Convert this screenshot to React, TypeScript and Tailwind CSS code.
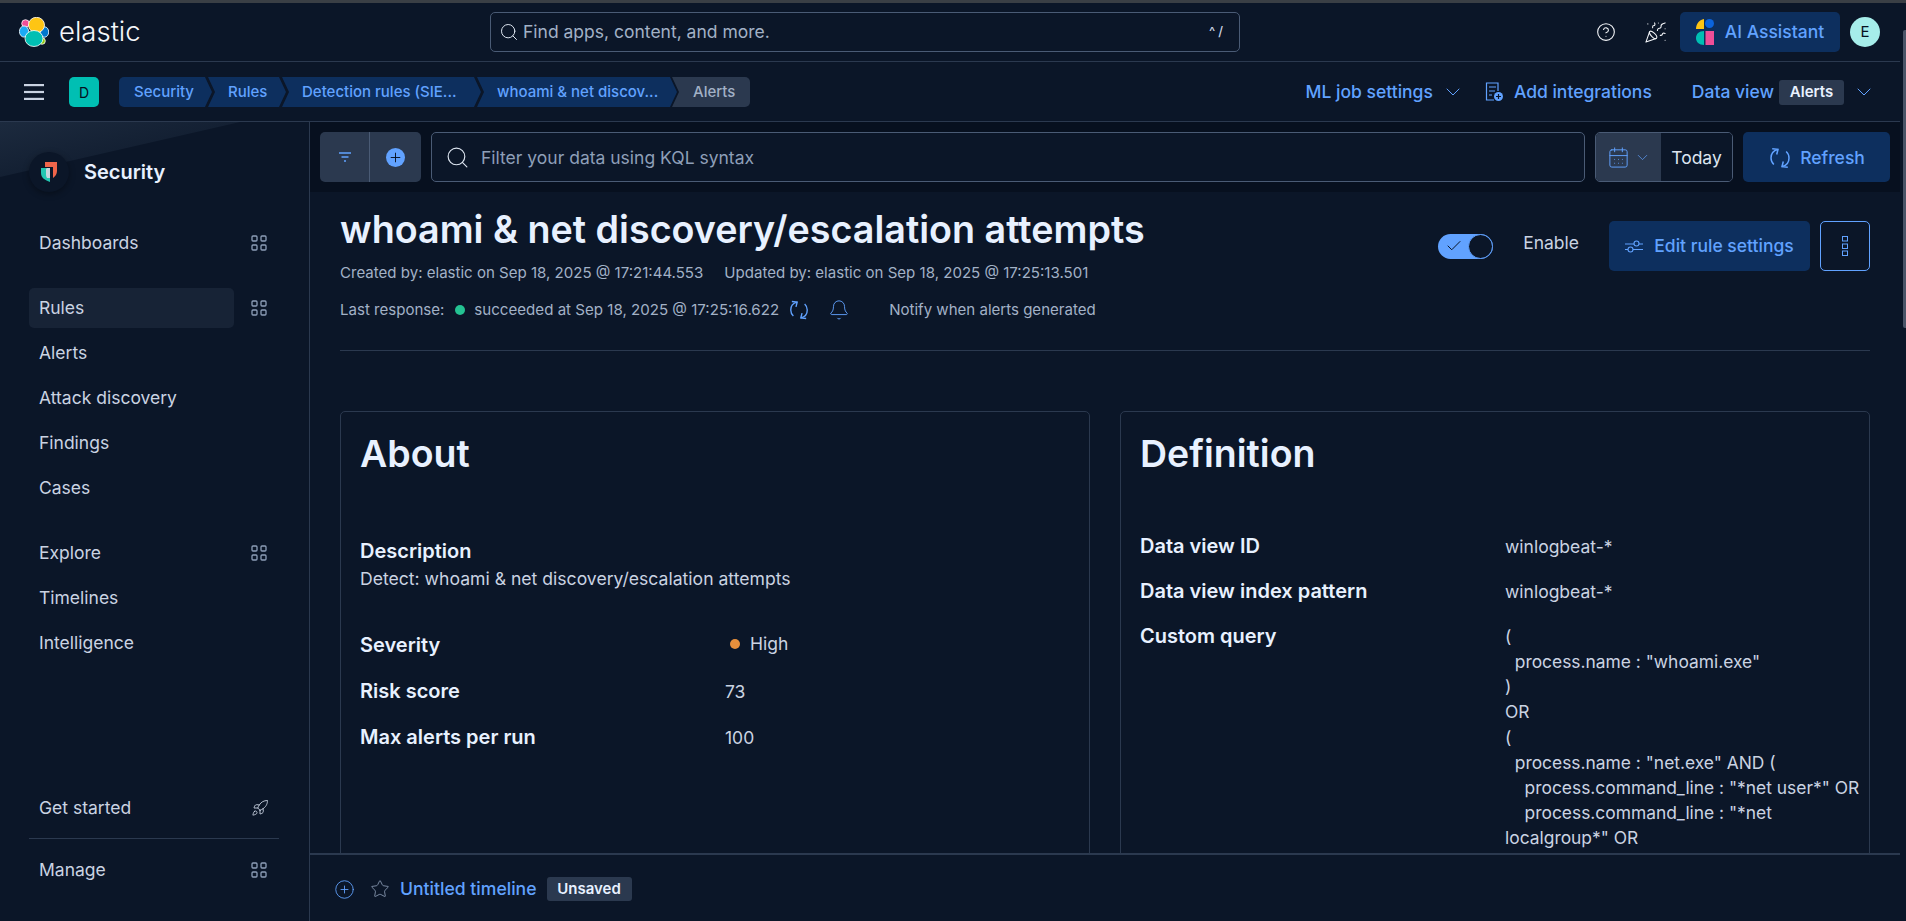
import { Search, ChevronDown, CalendarDays, Bell, PartyPopper, Rocket, Star, Check, CircleHelp, CirclePlus, Plus } from 'lucide-react'

const font = "font-['Inter',sans-serif]"

function ElasticLogo() {
  return (
    <svg width="30" height="30" viewBox="0 0 30 30" className="shrink-0" stroke="#fff" strokeWidth="0.800">
      <circle cx="6.500" cy="6.500" r="3.800" fill="#f04e98" />
      <ellipse cx="5" cy="14.500" rx="4.600" ry="5.600" fill="#1ba9f5" />
      <ellipse cx="25.500" cy="15" rx="4.200" ry="5.200" fill="#0077cc" />
      <ellipse cx="17.500" cy="8" rx="8" ry="7.700" fill="#fec514" />
      <circle cx="23" cy="24" r="3.300" fill="#93c90e" />
      <ellipse cx="15" cy="21.500" rx="9" ry="8" fill="#00bfb3" />
    </svg>
  )
}

function SecurityLogo() {
  return (
    <svg width="16" height="20" viewBox="0 0 16 20">
      <path d="M4 0h12v9c0 3-1.500 5-4 7V5H4z" fill="#f0654a" />
      <path d="M0 6h9v14C4 18 0 16 0 11z" fill="#22c7b2" />
      <path d="M6 6h3v10H6c-.6-1-1-2-1-3V7z" fill="#c5d6de" />
    </svg>
  )
}

function AiLogo() {
  return (
    <svg width="18" height="26" viewBox="0 0 18 26">
      <path d="M8 0v10H0C0 5 3 1 8 0z" fill="#fec514" />
      <circle cx="13.500" cy="4.500" r="4.500" fill="#0b64dd" />
      <path d="M8 12v14C3 26 0 23 0 19s3-7 8-7z" fill="#00bfb3" />
      <rect x="9.500" y="12" width="8.500" height="14" fill="#f04e98" />
    </svg>
  )
}

function AppsIcon() {
  return (
    <svg width="16" height="16" viewBox="0 0 16 16" fill="none" stroke="#8e9fb8" strokeWidth="1.300" className="shrink-0">
      <rect x="1" y="1" width="5" height="5" rx="1" />
      <rect x="10" y="1" width="5" height="5" rx="1" />
      <rect x="1" y="10" width="5" height="5" rx="1" />
      <rect x="10" y="10" width="5" height="5" rx="1" />
    </svg>
  )
}

function SyncIcon({ size = 22 }: { size?: number }) {
  return (
    <svg width={size} height={size} viewBox="0 0 16 16" fill="none" stroke="#61a2ff" strokeWidth="1" className="shrink-0">
      <path d="M6.500 2.300C3.800 3 2 5.300 2 8c0 1.700.7 3.200 1.900 4.300" />
      <path d="M2.800 1.800l3.900.4-.9 3.500" />
      <path d="M9.500 13.700C12.200 13 14 10.700 14 8c0-1.700-.7-3.200-1.900-4.300" />
      <path d="M13.200 14.200l-3.900-.4.9-3.500" />
    </svg>
  )
}

function BurgerIcon() {
  return (
    <svg width="20" height="16" viewBox="0 0 20 16" fill="#cad3e2" className="shrink-0">
      <rect y="0" width="20" height="2.200" />
      <rect y="6.900" width="20" height="2.200" />
      <rect y="13.800" width="20" height="2.200" />
    </svg>
  )
}

function IntegrationsIcon() {
  return (
    <svg width="19" height="20" viewBox="0 0 19 20" fill="none" stroke="#61a2ff" strokeWidth="1.200" className="shrink-0">
      <path d="M9 18H1.500V1h11.500v8" />
      <path d="M4 5h7M4 9h6M4 13h3" />
      <circle cx="13.500" cy="14.500" r="4.500" fill="#61a2ff" stroke="none" />
      <path d="M13.500 12v5M11 14.500h5" stroke="#0b1628" />
    </svg>
  )
}

function SettingsIcon() {
  return (
    <svg width="18" height="13" viewBox="0 0 18 13" fill="none" stroke="#61a2ff" strokeWidth="1.100" className="shrink-0">
      <path d="M0 4h9M14 4h4M0 9.500h3M8 9.500h10" />
      <circle cx="11.500" cy="3.500" r="2.500" />
      <circle cx="5.500" cy="9.500" r="2.500" />
    </svg>
  )
}

function NavRow({ label, active, apps, icon }: { label: string; active?: boolean; apps?: boolean; icon?: boolean }) {
  return (
    <div className="flex h-10 items-center">
      <div className={`flex h-10 w-[205px] items-center rounded-[5px] pl-[10px] text-[17.5px] text-[#cad3e2] ${active ? 'bg-[#172336]' : ''}`}>{label}</div>
      <div className="ml-[17px]">
        {apps && <AppsIcon />}
        {icon && <Rocket size={18} strokeWidth={1.200} className="text-[#cad3e2]" />}
      </div>
    </div>
  )
}

function Sidebar() {
  return (
    <aside className="relative flex w-[310px] shrink-0 flex-col border-r border-[#2b394f] bg-[#0b1628] pl-[29px]">
      <div className="absolute left-0 top-0 h-[55px] w-[240px] bg-gradient-to-br from-[#1c2a3e] to-transparent [clip-path:polygon(0_0,100%_0,0_100%)]" />
      <div className="relative mt-[30px] flex h-10 items-center">
        <div className="flex h-10 w-10 items-center justify-center rounded-full bg-[#0b1628] shadow-[0_2px_6px_rgba(0,0,0,0.35)]">
          <SecurityLogo />
        </div>
        <span className="ml-[15px] text-[20px] font-semibold text-[#e8f1ff]">Security</span>
      </div>
      <div className="mt-[31px]">
        <NavRow label="Dashboards" apps />
      </div>
      <div className="mt-[25px] flex flex-col gap-[5px]">
        <NavRow label="Rules" active apps />
        <NavRow label="Alerts" />
        <NavRow label="Attack discovery" />
        <NavRow label="Findings" />
        <NavRow label="Cases" />
      </div>
      <div className="mt-[25px] flex flex-col gap-[5px]">
        <NavRow label="Explore" apps />
        <NavRow label="Timelines" />
        <NavRow label="Intelligence" />
      </div>
      <div className="mt-auto mb-[31px] flex flex-col">
        <NavRow label="Get started" icon />
        <div className="mb-[11px] mt-[10px] h-px w-[250px] bg-[#2b394f]" />
        <NavRow label="Manage" apps />
      </div>
    </aside>
  )
}

const crumbs = [
  { label: 'Security', w: 'w-[93px]', first: true },
  { label: 'Rules', w: 'w-[78px]' },
  { label: 'Detection rules (SIE...', w: 'w-[199px]' },
  { label: 'whoami & net discov...', w: 'w-[200px]' },
]

function Breadcrumbs() {
  return (
    <div className="ml-5 flex h-[30px] items-center text-[15px] font-medium">
      {crumbs.map(c => (
        <div
          key={c.label}
          className={`${c.w} flex h-full items-center bg-[#0d2f5e] text-[#61a2ff] ${
            c.first
              ? 'rounded-l-[5px] pl-[15px] [clip-path:polygon(0_0,calc(100%-7px)_0,100%_50%,calc(100%-7px)_100%,0_100%)]'
              : '-ml-[4px] pl-[20px] [clip-path:polygon(0_0,calc(100%-7px)_0,100%_50%,calc(100%-7px)_100%,0_100%,7px_50%)]'
          }`}
        >
          <span className="whitespace-nowrap">{c.label}</span>
        </div>
      ))}
      <div className="-ml-[5px] flex h-full w-[78px] items-center rounded-r-[5px] bg-[#2b394f] pl-[21px] text-[#a2b1c6] [clip-path:polygon(0_0,100%_0,100%_100%,0_100%,7px_50%)]">Alerts</div>
    </div>
  )
}

function Header() {
  return (
    <header className="shrink-0 bg-[#0b1628]">
      <div className="flex h-[59px] items-center border-b border-[#2b394f] pl-[19px] pr-[20px]">
        <div className="flex w-[471px] items-center gap-[10px]">
          <ElasticLogo />
          <span className="text-[27.5px] font-light leading-none text-[#f5f7fa]">elastic</span>
        </div>
        <div className="flex h-10 w-[750px] items-center rounded-[5px] border border-[#4a5b75] pl-[8px] pr-[10px]">
          <Search size={20} strokeWidth={1.200} className="text-[#dde5f0]" />
          <span className="ml-[4px] text-[17.5px] text-[#a2b1c6]">Find apps, content, and more.</span>
          <span className="ml-auto mr-[3px] text-[13px] font-medium tracking-[3px] text-[#cad3e2]">^/</span>
        </div>
        <div className="ml-auto flex items-center">
          <CircleHelp size={20} strokeWidth={1.300} className="text-[#f5f7fa]" />
          <PartyPopper size={23} strokeWidth={1.100} className="ml-[28px] text-[#f5f7fa]" />
          <div className="ml-[13px] flex h-10 w-[160px] items-center justify-center gap-[11px] rounded-[5px] bg-[#0d2f5e]">
            <AiLogo />
            <span className="text-[17.5px] font-medium text-[#61a2ff]">AI Assistant</span>
          </div>
          <div className="ml-[10px] flex h-[30px] w-[30px] items-center justify-center rounded-full bg-[#a6edea] text-[15px] text-[#07101f]">E</div>
        </div>
      </div>
      <div className="flex h-[60px] items-center border-b border-[#2b394f] pl-6 pr-[27px] pt-[1px]">
        <BurgerIcon />
        <div className="ml-[25px] flex h-[30px] w-[30px] items-center justify-center rounded-[5px] bg-[#00bfb3] text-[14px] text-[#07101f]">D</div>
        <Breadcrumbs />
        <div className="ml-auto flex items-center text-[17.5px] font-medium text-[#61a2ff]">
          <span>ML job settings</span>
          <ChevronDown size={24} strokeWidth={1} className="ml-[8px]" />
          <span className="ml-[20px]"><IntegrationsIcon /></span>
          <span className="ml-[10px]">Add integrations</span>
          <span className="ml-[40px]">Data view</span>
          <span className="ml-[5px] flex h-[25px] w-[65px] items-center justify-center rounded-[3px] bg-[#2b394f] text-[15px] font-semibold text-[#e8f1ff]">Alerts</span>
          <ChevronDown size={24} strokeWidth={1} className="ml-[8px] -mr-[3px]" />
        </div>
      </div>
    </header>
  )
}

function FilterBar() {
  return (
    <div className="flex h-[70px] shrink-0 items-center gap-[10px] bg-[#07101f] pl-[10px] pr-[10px]">
      <div className="flex h-[50px] w-[101px] rounded-[5px] bg-[#2b394f]">
        <div className="flex w-[50px] items-center justify-center border-r border-[#4a5b75] text-[#61a2ff]">
          <svg width="14" height="12" viewBox="0 0 14 12" fill="none" stroke="currentColor" strokeWidth="1.300">
            <path d="M1 2h12M3.500 6h7M6 10h2" />
          </svg>
        </div>
        <div className="flex flex-1 items-center justify-center">
          <span className="flex h-[19px] w-[19px] items-center justify-center rounded-full bg-[#61a2ff]">
            <Plus size={15} strokeWidth={1.500} className="text-[#07101f]" />
          </span>
        </div>
      </div>
      <div className="flex h-[50px] w-[1154px] items-center rounded-[5px] border border-[#4a5b75] bg-[#0b1628] pl-[13px]">
        <Search size={25} strokeWidth={1.100} className="text-[#dde5f0]" />
        <span className="ml-[11px] pt-[2px] text-[17.5px] text-[#8e9fb8]">Filter your data using KQL syntax</span>
      </div>
      <div className="flex h-[50px] w-[138px] overflow-hidden rounded-[5px] border border-[#4a5b75]">
        <div className="flex w-[65px] items-center justify-center gap-[4px] bg-[#2b394f] text-[#61a2ff]">
          <CalendarDays size={23} strokeWidth={1} />
          <ChevronDown size={17} strokeWidth={1} />
        </div>
        <div className="flex flex-1 items-center justify-center bg-[#0b1628] pt-[2px] text-[17.5px] text-[#dde5f0]">Today</div>
      </div>
      <div className="flex h-[50px] w-[147px] items-center justify-center gap-[8px] rounded-[5px] bg-[#0d2f5e] pt-[2px] text-[17.5px] font-medium text-[#61a2ff]">
        <SyncIcon size={24} />
        Refresh
      </div>
    </div>
  )
}

function RuleHeader() {
  return (
    <div className="border-b border-[#2b394f] pb-[30px]">
      <div className="flex items-start justify-between">
        <div>
          <h1 className="text-[37.7px] font-semibold leading-[42px] text-[#e8f1ff]">whoami &amp; net discovery/escalation attempts</h1>
          <div className="mt-[13px] flex gap-[21px] text-[15.05px] leading-5 text-[#a2b1c6]">
            <span>Created by: elastic on Sep 18, 2025 @ 17:21:44.553</span>
            <span>Updated by: elastic on Sep 18, 2025 @ 17:25:13.501</span>
          </div>
          <div className="mt-[17px] flex h-5 items-center text-[15.05px] text-[#a2b1c6]">
            <span>Last response:</span>
            <span className="ml-[11px] h-[10px] w-[10px] rounded-full bg-[#24c292]" />
            <span className="ml-[9px] text-[15.1px]">succeeded at Sep 18, 2025 @ 17:25:16.622</span>
            <span className="ml-[9px]"><SyncIcon size={22} /></span>
            <Bell size={22} strokeWidth={1} className="ml-[18px] text-[#61a2ff]" />
            <span className="ml-[39px]">Notify when alerts generated</span>
          </div>
        </div>
        <div className="mt-[13px] flex items-center">
          <div className="flex h-[25px] w-[55px] items-center justify-between rounded-full bg-[#61a2ff] pl-[7px]">
            <Check size={18} strokeWidth={1.300} className="text-[#07101f]" />
            <span className="h-[25px] w-[25px] rounded-full border border-[#61a2ff] bg-[#0b1628]" />
          </div>
          <span className="ml-[30px] mb-[5px] text-[17.5px] text-[#cad3e2]">Enable</span>
          <div className="ml-[30px] flex h-[50px] w-[201px] items-center justify-center gap-[11px] rounded-[5px] bg-[#0d2f5e] text-[17.5px] font-medium text-[#61a2ff]">
            <SettingsIcon />
            Edit rule settings
          </div>
          <div className="ml-[10px] flex h-[50px] w-[50px] items-center justify-center rounded-[5px] border border-[#61a2ff]">
            <svg width="6" height="20" viewBox="0 0 6 20" fill="none" stroke="#61a2ff" strokeWidth="1">
              <rect x="0.500" y="0.500" width="5" height="4.500" />
              <rect x="0.500" y="8" width="5" height="4.500" />
              <rect x="0.500" y="15" width="5" height="4.500" />
            </svg>
          </div>
        </div>
      </div>
    </div>
  )
}

const query = [
  '(',
  '\u00a0\u00a0process.name : "whoami.exe"',
  ')',
  'OR',
  '(',
  '\u00a0\u00a0process.name : "net.exe" AND (',
  '\u00a0\u00a0\u00a0\u00a0process.command_line : "*net user*" OR',
  '\u00a0\u00a0\u00a0\u00a0process.command_line : "*net localgroup*" OR',
]

function DefRow({ label, children, w }: { label: string; w: string; children: React.ReactNode }) {
  return (
    <div className="flex leading-[25px]">
      <div className={`${w} shrink-0 text-[20px] font-semibold text-[#e8f1ff]`}>{label}</div>
      <div className="min-w-0 flex-1 text-[17.5px] text-[#cad3e2]">{children}</div>
    </div>
  )
}

function Cards() {
  return (
    <div className="mt-[60px] grid grid-cols-2 gap-[30px]">
      <section className="h-[600px] rounded-[5px] border border-[#2b394f] px-[19px] pt-[21px]">
        <h2 className="text-[37.5px] font-semibold leading-[42px] text-[#e8f1ff]">About</h2>
        <div className="mt-[64px] leading-[25px]">
          <div className="text-[20px] font-semibold text-[#e8f1ff]">Description</div>
          <div className="mt-[2px] text-[17.6px] text-[#cad3e2]">Detect: whoami &amp; net discovery/escalation attempts</div>
        </div>
        <div className="mt-[42px] flex flex-col gap-[21px]">
          <DefRow label="Severity" w="w-[365px]">
            <span className="-mt-[2px] flex items-center">
              <span className="ml-[5px] h-[10px] w-[10px] rounded-full bg-[#e8903c]" />
              <span className="ml-[10px]">High</span>
            </span>
          </DefRow>
          <DefRow label="Risk score" w="w-[365px]">73</DefRow>
          <DefRow label="Max alerts per run" w="w-[365px]">100</DefRow>
        </div>
      </section>
      <section className="h-[600px] rounded-[5px] border border-[#2b394f] px-[19px] pt-[21px]">
        <h2 className="text-[37.5px] font-semibold leading-[42px] text-[#e8f1ff]">Definition</h2>
        <div className="mt-[59px] flex flex-col gap-5">
          <DefRow label="Data view ID" w="w-[365px]">winlogbeat-*</DefRow>
          <DefRow label="Data view index pattern" w="w-[365px]">winlogbeat-*</DefRow>
          <DefRow label="Custom query" w="w-[365px]">
            <div className="-mr-[12px] text-[17.4px] leading-[25.12px]">
              {query.map((line, i) => <div key={i}>{line}</div>)}
            </div>
          </DefRow>
        </div>
      </section>
    </div>
  )
}

function TimelineBar() {
  return (
    <div className="flex h-[68px] shrink-0 items-center border-t-2 border-[#2b394f] bg-[#0b1628] pl-[24px] pt-[2px]">
      <CirclePlus size={21} strokeWidth={1} className="text-[#61a2ff]" />
      <Star size={20} strokeWidth={1} className="ml-[15px] text-[#8e9fb8]" />
      <span className="ml-[10px] text-[17.6px] font-medium text-[#61a2ff]">Untitled timeline</span>
      <span className="ml-[10px] flex h-6 w-[85px] items-center justify-center rounded-[3px] bg-[#2b394f] text-[15px] font-semibold text-[#e8f1ff]">Unsaved</span>
    </div>
  )
}

export default function App() {
  return (
    <div className={`${font} flex h-[921px] w-full flex-col overflow-hidden bg-[#0b1628]`}>
      <div className="h-[3px] shrink-0 bg-[#3a3f45]" />
      <div className="flex min-h-0 flex-1">
        <div className="flex min-w-0 flex-1 flex-col">
          <Header />
          <div className="flex min-h-0 flex-1">
            <Sidebar />
            <main className="flex min-w-0 flex-1 flex-col">
              <FilterBar />
              <div className="min-h-0 flex-1 overflow-hidden px-[30px] pt-[16px]">
                <RuleHeader />
                <Cards />
              </div>
              <TimelineBar />
            </main>
          </div>
        </div>
        <div className="flex w-[6px] shrink-0 justify-end bg-[#0b1628] pt-[27px]">
          <div className="h-[298px] w-[3px] rounded-l-[2px] bg-[#4a5568]" />
        </div>
      </div>
    </div>
  )
}
